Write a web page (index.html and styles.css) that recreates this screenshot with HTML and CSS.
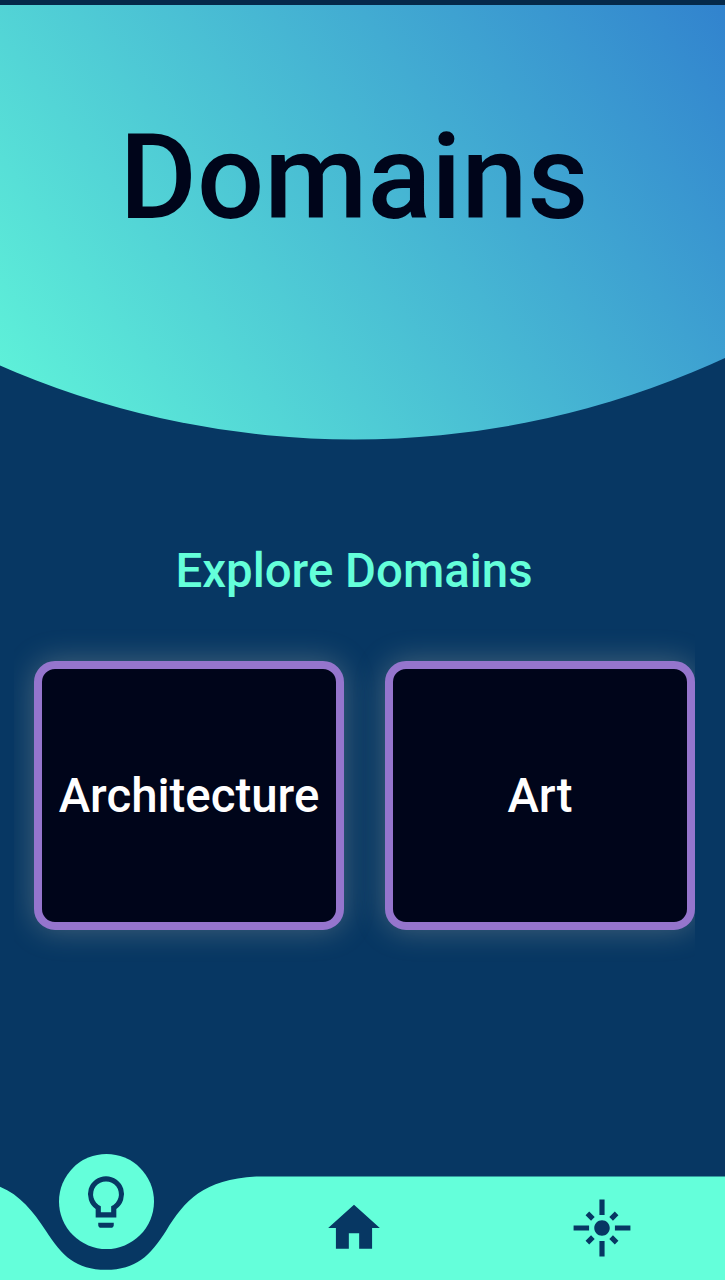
FILE: index.html
```html
<!DOCTYPE html>
<html lang="en">
<head>
<meta charset="utf-8">
<title>Domains</title>
<link rel="stylesheet" href="styles.css">
</head>
<body>
<div class="app">
  <header class="hero"><h1 class="hero-title">Domains</h1></header>
  <main class="content">
    <h2 class="section-title">Explore Domains</h2>
    <div class="cards">
      <div class="card">Architecture</div>
      <div class="card">Art</div>
    </div>
  </main>
  <nav class="nav">
    <svg class="nav-shape" viewBox="0 0 725 104"><path d="M0 10.7C20 19 33 35 46 55C62 80 76 93.8 106 93.8C136 93.8 150 80 166 55C185 24 204 3 258 .5H725V104H0z"/></svg>
    <a class="nav-item active"><span class="bubble">
      <svg class="icon" viewBox="0 0 24 24"><path fill-rule="evenodd" d="M12 2a7 7 0 0 0-4 12.74V18h8v-3.26A7 7 0 0 0 12 2zm2 11.6V16h-4v-2.4a5 5 0 1 1 4 0zM9 20v1c0 .55.45 1 1 1h4c.55 0 1-.45 1-1v-1z"/></svg>
    </span></a>
    <a class="nav-item"><svg class="icon" viewBox="0 0 24 24"><path d="M10 20v-6h4v6h5v-8h3L12 3 2 12h3v8z"/></svg></a>
    <a class="nav-item"><svg class="icon" viewBox="0 0 24 24"><path d="M7 11H1v2h6v-2zm2.17-3.24L7.05 5.64 5.64 7.05l2.12 2.12 1.41-1.41zM13 1h-2v6h2V1zm5.36 6.05l-1.41-1.41-2.12 2.12 1.41 1.41 2.12-2.12zM17 11v2h6v-2h-6zm-5-2c-1.66 0-3 1.34-3 3s1.34 3 3 3 3-1.34 3-3-1.34-3-3-3zm2.83 7.24l2.12 2.12 1.41-1.41-2.12-2.12-1.41 1.41zm-9.19.71l1.41 1.41 2.12-2.12-1.41-1.41-2.12 2.12zM11 23h2v-6h-2v6z"/></svg></a>
  </nav>
</div>
</body>
</html>
```
FILE: styles.css
```css
* { box-sizing: border-box; }
body { margin: 0; font-family: Roboto, sans-serif; font-weight: 500; background: #073763; }
.app { height: 1280px; display: flex; flex-direction: column; overflow: hidden; border-top: 5px solid #05294a; }
.hero {
  height: 435px;
  background: linear-gradient(54deg, #64ffda -8%, #3182ce 101%);
  clip-path: circle(884px at 354px -449.5px);
}
.hero-title { width: 708px; margin: 0; padding-top: 103px; text-align: center; font-size: 118.5px; line-height: 140px; font-weight: 500; color: #00051a; }
.content { flex: 1; }
.section-title { width: 708px; margin: 0; padding-top: 103px; text-align: center; font-size: 47.4px; line-height: 57px; font-weight: 500; color: #64ffda; }
.cards { display: flex; gap: 41px; width: 681px; margin: 21px 0 0 14px; padding: 40px 0 40px 20px; overflow: hidden; }
.card {
  flex: 0 0 310px; height: 269px;
  display: flex; align-items: center; justify-content: center;
  border: 8px solid #9575cd; border-radius: 21px;
  background: #00051a; color: #fff; font-size: 47.4px;
  box-shadow: 0 0 31px rgba(255, 240, 200, .25);
}
.nav { position: relative; height: 104px; display: grid; grid-template-columns: 212px 284px 212px; }
.nav-shape { position: absolute; left: 0; top: 0; width: 725px; height: 104px; fill: #64ffda; }
.nav-item { position: relative; display: flex; align-items: center; justify-content: center; }
.active { align-items: flex-start; }
.bubble { display: flex; align-items: center; justify-content: center; width: 95px; height: 95px; margin-top: -22px; border-radius: 50%; background: #64ffda; }
.icon { width: 62px; height: 62px; fill: #073763; }
```
